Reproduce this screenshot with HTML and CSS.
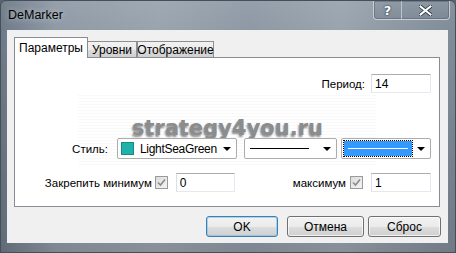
FILE: index.html
```html
<!DOCTYPE html>
<html>
<head>
<meta charset="utf-8">
<link rel="stylesheet" href="styles.css">
</head>
<body>
<div class="window">
  <div class="titlebar">
    <span class="title">DeMarker</span>
    <div class="caption-btns">
      <span class="cbtn help">?</span>
      <span class="cbtn close">
        <svg width="13" height="11" viewBox="0 0 13 11"><path d="M1.5 1.5 L11.5 9.5 M11.5 1.5 L1.5 9.5" stroke="#2b3440" stroke-width="3.6" stroke-linecap="square" fill="none"/><path d="M1.5 1.5 L11.5 9.5 M11.5 1.5 L1.5 9.5" stroke="#ffffff" stroke-width="2" stroke-linecap="square" fill="none"/></svg>
      </span>
    </div>
  </div>
  <div class="client">
    <div class="tabs">
      <div class="tab active">Параметры</div>
      <div class="tab t2">Уровни</div>
      <div class="tab t3">Отображение</div>
    </div>
    <div class="panel">
      <div class="watermark"><div class="noise"></div><span class="wm-text">strategy4you.ru</span></div>
      <div class="row row-period">
        <span class="label">Период:</span>
        <div class="input w60">14</div>
      </div>
      <div class="row row-style">
        <span class="label lbl-style">Стиль:</span>
        <div class="combo c1">
          <span class="swatch"></span><span class="ctext">LightSeaGreen</span><span class="arrow"></span>
        </div>
        <div class="combo c2">
          <span class="line"></span><span class="arrow"></span>
        </div>
        <div class="combo c3">
          <span class="sel"><span class="line white"></span></span><span class="arrow"></span>
        </div>
      </div>
      <div class="row row-fix">
        <span class="label">Закрепить минимум</span>
        <span class="check"><svg width="11" height="11" viewBox="0 0 11 11"><path d="M2 5.5 L4.5 8 L9 2.5" stroke="#8a8a8a" stroke-width="1.6" fill="none"/></svg></span>
        <div class="input w59">0</div>
        <span class="label lbl-max">максимум</span>
        <span class="check"><svg width="11" height="11" viewBox="0 0 11 11"><path d="M2 5.5 L4.5 8 L9 2.5" stroke="#8a8a8a" stroke-width="1.6" fill="none"/></svg></span>
        <div class="input w60">1</div>
      </div>
    </div>
    <div class="buttons">
      <button class="btn ok">OK</button>
      <button class="btn cancel">Отмена</button>
      <button class="btn reset">Сброс</button>
    </div>
  </div>
</div>
</body>
</html>
```
FILE: styles.css
```css
* { box-sizing: border-box; }
html, body { margin: 0; padding: 0; }
body {
  width: 456px;
  height: 253px;
  overflow: hidden;
  background: #5a6470;
  font-family: "Liberation Sans", Arial, sans-serif;
  font-size: 11.5px;
  color: #000;
}
.window {
  width: 456px;
  height: 253px;
  border: 1px solid #454f5a;
  border-radius: 6px 6px 0 0;
  background:
    linear-gradient(to bottom, rgba(255,255,255,0.06) 0, rgba(0,0,0,0) 30px, rgba(0,0,0,0.12) 100%),
    linear-gradient(to right, #6d7a87 0%, #8f9aa6 12%, #9aa4ae 35%, #8e99a5 55%, #9aa4ae 75%, #7f8b98 100%);
  display: flex;
  flex-direction: column;
}
.titlebar {
  height: 29px;
  display: flex;
  align-items: flex-start;
  padding-left: 7px;
}
.title {
  font-family: "Liberation Sans", Arial, sans-serif;
  font-size: 12.5px;
  color: #000;
  margin-top: 7px;
  text-shadow: 0 0 6px rgba(255,255,255,0.6);
}
.caption-btns {
  margin-left: auto;
  margin-right: 5px;
  display: flex;
  height: 19px;
  border: 1px solid rgba(225,230,236,0.7);
  border-top: none;
  border-radius: 0 0 4px 4px;
  box-shadow: inset 0 0 0 1px rgba(60,70,80,0.35);
  background: linear-gradient(to bottom, rgba(140,152,165,0.6), rgba(120,132,145,0.6));
}
.cbtn {
  display: flex;
  align-items: center;
  justify-content: center;
  height: 100%;
  font-family: "DejaVu Sans", sans-serif;
  font-weight: bold;
  color: #fff;
}
.help {
  width: 28px;
  font-size: 13px;
  border-right: 1px solid rgba(225,230,236,0.6);
  text-shadow: 0 0 2px #2b3440, 0 0 1px #2b3440;
}
.close { width: 47px; }
.client {
  flex: 1;
  margin: 0 7px 9px 6px;
  background: #f0f0f0;
  padding: 7px 8px 0 7px;
  display: flex;
  flex-direction: column;
}
.tabs {
  display: flex;
  align-items: flex-end;
  height: 20px;
}
.tab {
  height: 16px;
  border: 1px solid #8e8f8f;
  border-bottom: none;
  background: linear-gradient(to bottom, #f2f2f2 0%, #ebebeb 50%, #dddddd 51%, #cfcfcf 100%);
  display: flex;
  align-items: center;
  justify-content: center;
  position: relative;
  font-size: 12px;
}
.tab.active {
  height: 21px;
  margin-bottom: -1px;
  background: #fff;
  width: 74px;
  z-index: 2;
  border-color: #898c95;
  padding-bottom: 1px;
}
.t2 { width: 50px; margin-left: -1px; }
.t3 { width: 77px; margin-left: 0; }
.panel {
  height: 150px;
  background: #fff;
  border: 1px solid #898c95;
  position: relative;
  padding: 16px 8px 0 0;
}
.watermark {
  position: absolute;
  left: 63px;
  top: 37px;
  width: 298px;
  height: 70px;
  display: flex;
  align-items: flex-start;
  justify-content: center;
}
.noise {
  position: absolute;
  inset: 0;
  background: repeating-linear-gradient(to bottom, rgba(0,0,0,0.025) 0 1px, rgba(0,0,0,0) 1px 3px);
}
.wm-text {
  position: relative;
  font-family: "DejaVu Sans", sans-serif;
  font-weight: bold;
  font-size: 21px;
  line-height: 24px;
  color: #8c8c8c;
  text-shadow: -1px 2px 2px rgba(0,0,0,0.45);
  margin-top: 21px;
  margin-left: 1px;
}
.row {
  display: flex;
  align-items: center;
  justify-content: flex-end;
  position: relative;
  z-index: 1;
}
.row-period { height: 19px; }
.row-period .label { margin-right: 6px; }
.row-style { height: 21px; margin-top: 45px; }
.row-fix { height: 19px; margin-top: 14px; }
.lbl-style { margin-right: 9px; }
.input {
  height: 19px;
  border: 1px solid #e3e9ef;
  border-top-color: #abadb3;
  border-left-color: #dbdfe6;
  background: #fff;
  padding-left: 3px;
  display: flex;
  align-items: center;
  font-size: 12px;
}
.w60 { width: 60px; }
.w59 { width: 59px; }
.combo {
  height: 21px;
  border: 1px solid #acacac;
  border-radius: 2px;
  background: #fff;
  display: flex;
  align-items: center;
  position: relative;
}
.c1 { width: 120px; margin-right: 7px; padding-left: 3px; }
.c2 { width: 93px; margin-right: 4px; padding-left: 5px; }
.c3 { width: 90px; padding-left: 2px; }
.swatch {
  width: 13px;
  height: 13px;
  background: #20b2aa;
  border: 1px solid #188a84;
  margin-right: 6px;
}
.ctext { font-size: 12px; letter-spacing: -0.3px; }
.arrow {
  position: absolute;
  right: 5px;
  top: 8px;
  width: 0;
  height: 0;
  border-left: 4px solid transparent;
  border-right: 4px solid transparent;
  border-top: 4px solid #000;
}
.line {
  display: block;
  width: 59px;
  height: 1px;
  background: #000;
}
.sel {
  width: 68px;
  height: 15px;
  background: #3399ff;
  outline: 1px dotted #000;
  display: flex;
  align-items: center;
  justify-content: center;
}
.line.white { background: #fff; width: 60px; }
.check {
  width: 13px;
  height: 13px;
  border: 1px solid #9a9a9a;
  background: linear-gradient(135deg, #dcdcdc, #f4f4f4);
  display: flex;
  align-items: center;
  justify-content: center;
  margin-left: 3px;
  margin-right: 8px;
}
.lbl-max { margin-left: 58px; }
.row-fix .lbl-max + .check { margin-left: 4px; }
.buttons {
  display: flex;
  justify-content: flex-end;
  margin-top: 9px;
  margin-right: -1px;
}
.btn {
  height: 21px;
  border: 1px solid #707070;
  border-radius: 3px;
  background: linear-gradient(to bottom, #f2f2f2 0%, #ebebeb 50%, #dddddd 51%, #cfcfcf 100%);
  box-shadow: inset 0 0 0 1px rgba(255,255,255,0.7);
  font-family: "Liberation Sans", Arial, sans-serif;
  font-size: 12px;
  color: #000;
  padding: 0;
}
.ok { width: 72px; margin-right: 9px; border-color: #3c7fb1; box-shadow: inset 0 0 0 1px rgba(120,190,235,0.6); }
.cancel { width: 77px; margin-right: 4px; }
.reset { width: 73px; }
```
